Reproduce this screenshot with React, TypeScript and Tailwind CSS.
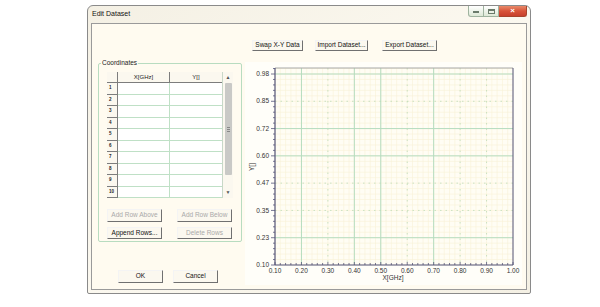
import clsx from "clsx";

const font = { fontFamily: '"Liberation Sans", Arial, sans-serif' };

function Btn({
  children,
  disabled,
  className,
}: {
  children: React.ReactNode;
  disabled?: boolean;
  className?: string;
}) {
  return (
    <div
      className={clsx(
        "flex items-center justify-center border border-t-[#f4f4f4] border-l-[#f4f4f4] border-r-[#707070] border-b-[#707070] bg-[#fbf8ef] text-[6.5px] leading-none",
        disabled ? "text-[#a9a9a9]" : "text-[#111]",
        className
      )}
    >
      {children}
    </div>
  );
}

const rows = [1, 2, 3, 4, 5, 6, 7, 8, 9, 10];

function Table() {
  return (
    <div className="flex h-[126px] w-[126px] overflow-hidden">
      <div className="flex w-[115px] flex-col bg-white">
        <div className="flex h-[11px] shrink-0 border-b border-[#7d7d7d] bg-[#fbf8ef] text-[6px] leading-none text-[#222]">
          <div className="w-[11px] border-r border-[#7d7d7d]" />
          <div className="flex w-[52px] items-center justify-center border-r border-[#7d7d7d]">X[GHz]</div>
          <div className="flex w-[52px] items-center justify-center">Y[]</div>
        </div>
        {rows.map((r) => (
          <div key={r} className="flex h-[11.5px] shrink-0">
            <div className="flex w-[11px] items-center border-r border-b border-[#7d7d7d] bg-[#fbf8ef] pl-[2px] text-[4.5px] font-bold leading-none text-[#222]">
              {r}
            </div>
            <div className="w-[52px] border-r border-b border-[#bfe0c6]" />
            <div className="w-[52px] border-b border-[#bfe0c6]" />
          </div>
        ))}
      </div>
      <div className="flex w-[11px] flex-col items-center border-l border-[#c8d8c8] bg-[#fbf8ef] text-[5px] leading-none text-[#555]">
        <div className="flex h-[11px] items-center">▲</div>
        <div className="flex h-[92px] w-[7px] items-center justify-center rounded-[1px] bg-[#c9c9c6]">
          <div className="flex flex-col gap-[1px]">
            <div className="h-px w-[3px] bg-[#888]" />
            <div className="h-px w-[3px] bg-[#888]" />
            <div className="h-px w-[3px] bg-[#888]" />
          </div>
        </div>
        <div className="flex-1" />
        <div className="flex h-[11px] items-center">▼</div>
      </div>
    </div>
  );
}

function Chart() {
  const X0 = 30;
  const X1 = 268;
  const YT = 6;
  const YB = 203;
  const dx = (X1 - X0) / 9;
  const dy = (YB - 12) / 7;
  const xs = (i: number) => X0 + i * dx;
  const ys = (j: number) => YB - j * dy;
  const xl = ["0.10", "0.20", "0.30", "0.40", "0.50", "0.60", "0.70", "0.80", "0.90", "1.00"];
  const yl = ["0.10", "0.23", "0.35", "0.47", "0.60", "0.72", "0.85", "0.98"];
  const minorX: number[] = [];
  for (let x = X0; x <= X1 + 0.1; x += dx / 5) minorX.push(x);
  const minorY: number[] = [];
  for (let y = YB; y >= YT; y -= dy / 5) minorY.push(y);
  const solidX = [1, 3, 4, 6];
  const dotX = [2, 5, 7, 8];
  const solidY = [1, 4, 5, 7];
  const dotY = [2, 3, 6];
  return (
    <svg width="277" height="223" className="block" style={font}>
      <rect x={X0} y={YT} width={X1 - X0} height={YB - YT} fill="#fffdf4" />
      {minorX.map((x, i) => (
        <line key={"mx" + i} x1={x} x2={x} y1={YT} y2={YB} stroke="#f8f2d6" strokeWidth="0.6" />
      ))}
      {minorY.map((y, i) => (
        <line key={"my" + i} x1={X0} x2={X1} y1={y} y2={y} stroke="#f8f2d6" strokeWidth="0.6" />
      ))}
      {dotX.map((i) => (
        <line key={"dx" + i} x1={xs(i)} x2={xs(i)} y1={YT} y2={YB} stroke="#bcdab8" strokeWidth="0.8" strokeDasharray="1.5 4" />
      ))}
      {dotY.map((j) => (
        <line key={"dy" + j} x1={X0} x2={X1} y1={ys(j)} y2={ys(j)} stroke="#bcdab8" strokeWidth="0.8" strokeDasharray="1.5 4" />
      ))}
      {solidX.map((i) => (
        <line key={"sx" + i} x1={xs(i)} x2={xs(i)} y1={YT} y2={YB} stroke="#b5dcbf" strokeWidth="1" />
      ))}
      {solidY.map((j) => (
        <line key={"sy" + j} x1={X0} x2={X1} y1={ys(j)} y2={ys(j)} stroke="#b5dcbf" strokeWidth="1" />
      ))}
      <line x1={X0} x2={X1} y1={YT} y2={YT} stroke="#a8a8a8" strokeWidth="1.2" />
      <line x1={X1} x2={X1} y1={YT} y2={YB} stroke="#55557a" strokeWidth="1" />
      <line x1={X0} x2={X0} y1={YT} y2={YB} stroke="#55557a" strokeWidth="1.2" />
      <line x1={X0} x2={X1} y1={YB} y2={YB} stroke="#55557a" strokeWidth="1.2" />
      {minorY.map((y, i) => (
        <line key={"ty" + i} x1={i % 5 === 0 ? X0 - 4 : X0 - 2} x2={X0} y1={y} y2={y} stroke="#55557a" strokeWidth="0.8" />
      ))}
      {minorX.map((x, i) => (
        <line key={"tx" + i} x1={x} x2={x} y1={YB} y2={i % 5 === 0 ? YB - 3 : YB - 2} stroke="#55557a" strokeWidth="0.8" />
      ))}
      {yl.map((t, j) => (
        <text key={t} x={X0 - 6} y={ys(j) + 2.2} fontSize="6.5" textAnchor="end" fill="#333">
          {t}
        </text>
      ))}
      {xl.map((t, i) => (
        <text key={t} x={xs(i)} y={211} fontSize="6.5" textAnchor="middle" fill="#333">
          {t}
        </text>
      ))}
      <text x={148} y={218} fontSize="6.5" textAnchor="middle" fill="#333">
        X[GHz]
      </text>
      <text x={9} y={105} fontSize="6.5" textAnchor="middle" fill="#333" transform="rotate(-90 9 105)">
        Y[]
      </text>
    </svg>
  );
}

export default function App() {
  return (
    <div className="h-[307px] w-[600px] overflow-hidden bg-white pl-[87px] pt-[5px]" style={font}>
      <div className="flex h-[289px] w-[444px] flex-col rounded-t-[6px] rounded-b-[2px] border border-[#8a8a8a] bg-gradient-to-br from-[#f4f0e4] via-[#fbf8ef] to-[#f4f0e4] px-[3px] pb-[3px]">
        <div className="flex h-[17px] shrink-0 items-start justify-between">
          <div className="pl-[1px] pt-[4px] text-[7px] leading-none text-[#111]">Edit Dataset</div>
          <div className="flex">
            <div className="flex h-[11px] w-[16px] items-center justify-center rounded-bl-[3px] border border-t-0 border-[#9fb39f] bg-gradient-to-b from-[#ffffff] to-[#dde8d6]">
              <div className="mt-[2px] h-[1.5px] w-[6px] bg-[#6a7a6a]" />
            </div>
            <div className="flex h-[11px] w-[15px] items-center justify-center border border-t-0 border-l-0 border-[#9fb39f] bg-gradient-to-b from-[#ffffff] to-[#dde8d6]">
              <div className="h-[5px] w-[7px] border border-t-2 border-[#6a7a6a]" />
            </div>
            <div className="flex h-[11px] w-[28px] items-center justify-center rounded-br-[3px] border border-t-0 border-l-0 border-[#a8442c] bg-gradient-to-b from-[#e88a6a] via-[#d8543a] to-[#c8402c] text-[8px] font-bold leading-none text-white">
              ×
            </div>
          </div>
        </div>
        <div className="flex flex-1 flex-col border border-[#9a9a9a] bg-[#fffbf0]">
          <div className="mt-[16px] flex h-[11px] gap-[12px] pl-[160px]">
            <Btn className="w-[51px]">Swap X-Y Data</Btn>
            <Btn className="w-[53px]">Import Dataset...</Btn>
            <Btn className="ml-[2px] w-[55px]">Export Dataset...</Btn>
          </div>
          <div className="mt-[11px] flex gap-[3px] pl-[6px]">
            <div className="flex w-[144px] flex-col">
              <div className="relative mt-[1px] flex h-[179px] flex-col rounded-[2px] border border-[#b8dcc0] pl-[8px] pt-[8px]">
                <div className="absolute -top-[4px] left-[2px] bg-[#fffbf0] px-px text-[6.5px] leading-none text-[#222]">
                  Coordinates
                </div>
                <Table />
                <div className="mt-[11px] flex gap-[15px]">
                  <Btn disabled className="h-[13px] w-[55px]">Add Row Above</Btn>
                  <Btn disabled className="h-[13px] w-[55px]">Add Row Below</Btn>
                </div>
                <div className="mt-[5px] flex gap-[15px]">
                  <Btn className="h-[12px] w-[55px]">Append Rows...</Btn>
                  <Btn disabled className="h-[12px] w-[55px]">Delete Rows</Btn>
                </div>
              </div>
              <div className="mt-[28px] flex gap-[10px] pl-[20px]">
                <Btn className="h-[13px] w-[45px]">OK</Btn>
                <Btn className="h-[13px] w-[45px]">Cancel</Btn>
              </div>
            </div>
            <div className="h-[223px] w-[277px] bg-[#fffef9]">
              <Chart />
            </div>
          </div>
        </div>
      </div>
    </div>
  );
}
